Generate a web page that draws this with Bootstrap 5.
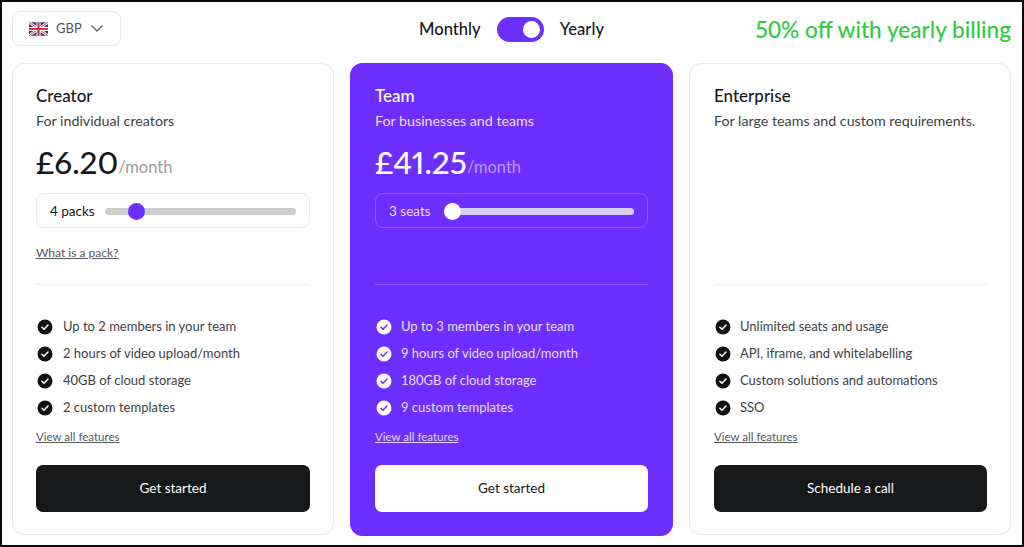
<!DOCTYPE html>
<html lang="en">
  <head>
    <meta charset="UTF-8" />
    <title>Pricing</title>
    <link
      href="https://cdn.jsdelivr.net/npm/bootstrap@5.3.3/dist/css/bootstrap.min.css"
      rel="stylesheet"
    />
    <style>
      html, body { height: 100%; overflow: hidden; }
      body {
        font-family: Lato, "Liberation Sans", sans-serif;
        color: #17181a;
        background: #fff;
      }
      .frame {
        height: 547px;
        border: 2px solid #0a0a0a;
        padding: 9px 11px 9px 10px;
      }
      .topbar {
        display: grid;
        grid-template-columns: 1fr auto 1fr;
        height: 35px;
        margin-bottom: 17px;
      }
      .currency-btn {
        width: 109px;
        height: 35px;
        padding: 0 0 0 16px;
        gap: 8px;
        border: 1px solid #e8e8ea;
        border-radius: 8px;
        font-size: 13px;
        color: #55565a;
        background: #fff;
      }
      .billing { font-size: 16.6px; gap: 16px; margin-top: -1px; font-weight: 500; }
      .toggle {
        width: 47px;
        height: 25px;
        border-radius: 13px;
        background: #6c2fff;
        padding: 4px;
      }
      .toggle span { width: 17px; height: 17px; border-radius: 50%; background: #fff; }
      .promo { font-size: 22.6px; font-weight: 500; color: #2ecc40; line-height: 38px; white-space: nowrap; }
      .plans { gap: 16px; }
      .plan {
        width: 322px;
        height: 472px;
        padding: 22px 23px;
        border: 1px solid #e9e9ec;
        border-radius: 12px;
      }
      .plan.plan-last { padding-left: 24px; }
      .plan.featured { width: 323px; height: 473px; padding: 22px 24px; background: #6c2fff; border-color: #6c2fff; color: #fff; }
      .plan-name { font-size: 17px; font-weight: 500; line-height: 20px; margin-bottom: 6px; }
      .plan-sub { font-size: 14.25px; line-height: 18px; color: #3e3f44; margin-bottom: 0; }
      .featured .plan-sub { color: #eadfff; }
      .plan-price { font-size: 31.5px; font-weight: 500; line-height: 38px; margin-top: 13px; height: 38px; font-variant-numeric: proportional-nums; }
      .plan-price small { font-size: 16.5px; font-weight: 400; color: #9a9a9e; vertical-align: 1px; }
      .featured .plan-price small { color: #b79bff; }
      .slider-box {
        height: 35px;
        margin-top: 12px;
        padding: 1px 13px 0;
        gap: 10px;
        border: 1px solid #ececef;
        border-radius: 8px;
        font-size: 13.5px;
        white-space: nowrap;
      }
      .featured .slider-box { gap: 13px; border-color: #8a5bff; color: #eadfff; }
      .slider-box input {
        -webkit-appearance: none;
        appearance: none;
        flex: 1;
        min-width: 0;
        height: 18px;
        background: transparent;
      }
      .slider-box input::-webkit-slider-runnable-track {
        height: 7px;
        border-radius: 4px;
        background: #cdcdcf;
      }
      .slider-box input::-webkit-slider-thumb {
        -webkit-appearance: none;
        width: 17px;
        height: 17px;
        margin-top: -5px;
        border-radius: 50%;
        background: #6c2fff;
      }
      .featured .slider-box input::-webkit-slider-runnable-track { background: #d6cdf0; }
      .featured .slider-box input::-webkit-slider-thumb { background: #fff; }
      .plan-link { font-size: 12px; line-height: 16px; color: #55565a; text-decoration: underline; display: block; }
      .featured .plan-link { color: #e3d8ff; }
      .pack-slot { height: 57px; padding-top: 17px; border-bottom: 1px solid #eeeeef; }
      .featured .pack-slot { border-color: #8a5bff; }
      .features { margin: 28px 0 0; padding: 0; list-style: none; font-size: 13px; color: #3e3f44; }
      .features li { height: 27px; gap: 10px; }
      .featured .features li, .plan-last .features li { gap: 9px; }
      .featured .features { color: #eadfff; }
      .tick { flex: none; width: 16px; height: 16px; margin-left: 1px; color: #111214; --tick-mark: #fff; }
      .featured .tick { color: #fff; --tick-mark: #6c2fff; }
      .features + .plan-link { margin-top: 8px; font-size: 11.5px; }
      .plan-cta {
        height: 47px;
        margin-top: 20px;
        border: 0;
        border-radius: 7px;
        font-size: 13.5px;
        background: #17181a;
        color: #fff;
      }
      .plan-cta:hover { background: #17181a; color: #fff; }
      .featured .plan-cta, .featured .plan-cta:hover { background: #fff; color: #17181a; }
      .chevron { margin-left: 1px; }
    </style>
  </head>
  <body>
    <svg width="0" height="0" class="position-absolute">
      <symbol id="tick" viewBox="0 0 16 16">
        <circle cx="8" cy="8" r="7.5" fill="currentColor" />
        <path d="M4.9 8.2l2.1 2.1 4-4.2" fill="none" stroke="var(--tick-mark)" stroke-width="1.5" stroke-linecap="round" stroke-linejoin="round" />
      </symbol>
    </svg>
    <div class="frame">
      <div class="topbar">
        <div>
          <button class="btn currency-btn d-flex align-items-center" type="button">
            <svg width="19" height="14" viewBox="0 0 60 42">
              <rect width="60" height="42" rx="3" fill="#2b3a75" />
              <path d="M0 0L60 42M60 0L0 42" stroke="#fff" stroke-width="8" />
              <path d="M0 0L60 42M60 0L0 42" stroke="#d8324a" stroke-width="3" />
              <path d="M30 0V42M0 21H60" stroke="#fff" stroke-width="13" />
              <path d="M30 0V42M0 21H60" stroke="#d8324a" stroke-width="7" />
            </svg>
            <span>GBP</span>
            <svg class="chevron" width="12" height="7" viewBox="0 0 12 7">
              <path d="M1 1l5 5 5-5" fill="none" stroke="#55565a" stroke-width="1.2" stroke-linecap="round" stroke-linejoin="round" />
            </svg>
          </button>
        </div>
        <div class="billing d-flex align-items-center">
          <span>Monthly</span>
          <div class="toggle d-flex justify-content-end"><span></span></div>
          <span>Yearly</span>
        </div>
        <div class="promo text-end">50% off with yearly billing</div>
      </div>

      <div class="plans d-flex">
        <div class="plan card d-block">
          <div class="plan-name">Creator</div>
          <p class="plan-sub">For individual creators</p>
          <div class="plan-price">£6.20<small>/month</small></div>
          <div class="slider-box d-flex align-items-center">
            <span>4 packs</span>
            <input type="range" min="1" max="23" value="4" aria-label="Packs" />
          </div>
          <div class="pack-slot"><a href="#" class="plan-link">What is a pack?</a></div>
          <ul class="features">
            <li class="d-flex align-items-center"><svg class="tick"><use href="#tick" /></svg>Up to 2 members in your team</li>
            <li class="d-flex align-items-center"><svg class="tick"><use href="#tick" /></svg>2 hours of video upload/month</li>
            <li class="d-flex align-items-center"><svg class="tick"><use href="#tick" /></svg>40GB of cloud storage</li>
            <li class="d-flex align-items-center"><svg class="tick"><use href="#tick" /></svg>2 custom templates</li>
          </ul>
          <a href="#" class="plan-link">View all features</a>
          <button class="btn plan-cta w-100" type="button">Get started</button>
        </div>

        <div class="plan featured card d-block">
          <div class="plan-name">Team</div>
          <p class="plan-sub">For businesses and teams</p>
          <div class="plan-price">£41.25<small>/month</small></div>
          <div class="slider-box d-flex align-items-center">
            <span>3 seats</span>
            <input type="range" min="3" max="100" value="3" aria-label="Seats" />
          </div>
          <div class="pack-slot"></div>
          <ul class="features">
            <li class="d-flex align-items-center"><svg class="tick"><use href="#tick" /></svg>Up to 3 members in your team</li>
            <li class="d-flex align-items-center"><svg class="tick"><use href="#tick" /></svg>9 hours of video upload/month</li>
            <li class="d-flex align-items-center"><svg class="tick"><use href="#tick" /></svg>180GB of cloud storage</li>
            <li class="d-flex align-items-center"><svg class="tick"><use href="#tick" /></svg>9 custom templates</li>
          </ul>
          <a href="#" class="plan-link">View all features</a>
          <button class="btn plan-cta w-100" type="button">Get started</button>
        </div>

        <div class="plan plan-last card d-block">
          <div class="plan-name">Enterprise</div>
          <p class="plan-sub">For large teams and custom requirements.</p>
          <div class="plan-price"></div>
          <div class="slider-box border-0"></div>
          <div class="pack-slot"></div>
          <ul class="features">
            <li class="d-flex align-items-center"><svg class="tick"><use href="#tick" /></svg>Unlimited seats and usage</li>
            <li class="d-flex align-items-center"><svg class="tick"><use href="#tick" /></svg>API, iframe, and whitelabelling</li>
            <li class="d-flex align-items-center"><svg class="tick"><use href="#tick" /></svg>Custom solutions and automations</li>
            <li class="d-flex align-items-center"><svg class="tick"><use href="#tick" /></svg>SSO</li>
          </ul>
          <a href="#" class="plan-link">View all features</a>
          <button class="btn plan-cta w-100" type="button">Schedule a call</button>
        </div>
      </div>
    </div>
    <script src="https://cdn.jsdelivr.net/npm/bootstrap@5.3.3/dist/js/bootstrap.bundle.min.js"></script>
  </body>
</html>
